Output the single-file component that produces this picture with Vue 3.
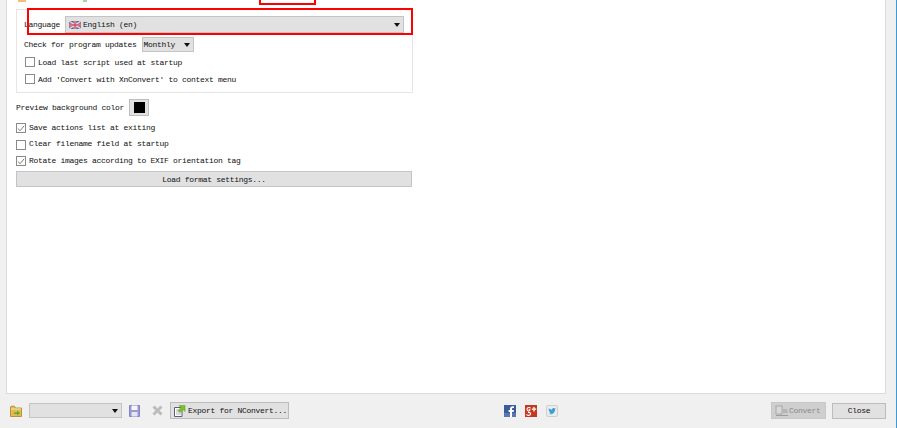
<script setup>
const boxRows = [
  { label: 'Load last script used at startup', checked: false },
  { label: "Add 'Convert with XnConvert' to context menu", checked: false },
]
const rows = [
  { label: 'Save actions list at exiting', checked: true },
  { label: 'Clear filename field at startup', checked: false },
  { label: 'Rotate images according to EXIF orientation tag', checked: true },
]
</script>

<template>
  <div class="window">
    <main class="panel">
      <div class="strip">
        <i class="mark orange"></i>
        <i class="mark green"></i>
      </div>
      <section class="group">
        <div class="lang-row">
          <span>Language</span>
          <div class="select lang">
            <svg class="flag" width="12" height="8" viewBox="0 0 12 8">
              <rect width="12" height="8" fill="#5a5a9c" />
              <path d="M0 0L12 8M12 0L0 8" stroke="#e0c8d4" stroke-width="1.6" />
              <path d="M6 0V8M0 4H12" stroke="#ecdce4" stroke-width="2.6" />
              <path d="M6 0V8M0 4H12" stroke="#cf4a60" stroke-width="1.4" />
            </svg>
            <span class="value">English (en)</span>
            <i class="arrow"></i>
          </div>
        </div>
        <div class="update-row">
          <span>Check for program updates</span>
          <div class="select monthly">
            <span class="value">Monthly</span>
            <i class="arrow"></i>
          </div>
        </div>
        <label v-for="r in boxRows" :key="r.label" class="check inner">
          <span class="box"></span>
          <span>{{ r.label }}</span>
        </label>
      </section>

      <div class="preview-row">
        <span>Preview background color</span>
        <button class="swatch-btn"><i class="swatch"></i></button>
      </div>
      <label v-for="r in rows" :key="r.label" class="check outer">
        <span class="box">
          <svg v-if="r.checked" width="9" height="9" viewBox="0 0 9 9">
            <path d="M1 4.5L3.5 7L8 1.5" fill="none" stroke="#777" stroke-width="1.1" />
          </svg>
        </span>
        <span class="outer-text">{{ r.label }}</span>
      </label>
      <button class="wide-btn">Load format settings...</button>

      <div class="annot annot-top"></div>
      <div class="annot annot-lang"></div>
    </main>

    <footer class="footer">
      <svg class="i-folder" width="12" height="12" viewBox="0 0 12 12">
        <path d="M0.5 2V11.5H11.5V3H5.5L4.5 1.2H1.2Z" fill="#e5b94a" stroke="#a8802c" stroke-width="0.8" />
        <path d="M1 4H11" stroke="#f6e6a6" />
        <path d="M4 7.5H7V5.5L10 8L7 10.5V9H4Z" fill="#4fae3a" />
      </svg>
      <div class="select script"><i class="arrow"></i></div>
      <svg class="i-save" width="11" height="12" viewBox="0 0 11 12">
        <path d="M0.5 0.5H10.5V11.5H0.5Z" fill="#9a9ad6" stroke="#8585c4" />
        <rect x="2.5" y="0.5" width="6" height="4.5" fill="#f6f6fc" />
        <rect x="2.5" y="7" width="6" height="4.5" fill="#e4e4f4" />
      </svg>
      <svg class="i-del" width="11" height="11" viewBox="0 0 11 11">
        <path d="M1.5 1.5L9.5 9.5M9.5 1.5L1.5 9.5" stroke="#bcbcbc" stroke-width="3" />
      </svg>
      <button class="btn export">
        <svg width="12" height="13" viewBox="0 0 12 13">
          <path d="M0.5 3.5H8V12.5H0.5Z" fill="#fff" stroke="#59617a" />
          <path d="M2 6H7M2 8H7M2 10H7" stroke="#9aa2b8" stroke-width="0.8" />
          <path d="M4 6.5L7 3.5L5 1.5H11V7.5L9 5.5L6 8.5Z" fill="#7fbf2a" stroke="#5c9a18" stroke-width="0.5" />
        </svg>
        <span>Export for NConvert...</span>
      </button>
      <div class="social">
        <svg width="12" height="12" viewBox="0 0 12 12">
          <rect width="12" height="12" fill="#3b5b9e" />
          <rect y="8" width="12" height="4" fill="#5a76b0" />
          <path d="M8 12V7H9.6L9.9 5H8V4C8 3.4 8.3 3 9 3H10V1.2H8.6C7 1.2 6 2.2 6 3.7V5H4.6V7H6V12Z" fill="#fff" />
        </svg>
        <svg width="12" height="12" viewBox="0 0 12 12">
          <rect width="12" height="12" fill="#c6381f" />
          <path d="M5.5 3.2C5 2.4 3 2 2.2 3.4C1.5 4.8 2.6 6 3.6 6C4.6 6 5 5.4 5 4.8H3.6M3 7.5C4.8 7 5.6 8 5.6 9C5.6 10.5 2 11 1.5 9.4" fill="none" stroke="#fff" stroke-width="1.1" />
          <path d="M9 2V6.5M6.8 4.2H11.2" stroke="#fff" stroke-width="1.3" />
        </svg>
        <svg width="12" height="12" viewBox="0 0 12 12">
          <rect x="0.5" y="0.5" width="11" height="11" rx="1.5" fill="#ececec" stroke="#cfcfcf" />
          <path d="M2.2 8.8C5.6 10 9.2 8 9 4.4L10 3.4L8.8 3.6C8 2.6 6 3 6 4.6C4.6 4.6 3.6 4 2.8 3.2C2.4 4.2 2.8 5.2 3.4 5.6L2.8 5.6C3 6.6 3.6 7 4.2 7.2L3.6 7.3C3.9 7.9 4.4 8.1 4.9 8.2C4.2 8.7 3.2 8.9 2.2 8.8Z" fill="#3d9fd8" />
        </svg>
      </div>
      <button class="btn convert">
        <svg width="14" height="12" viewBox="0 0 14 12">
          <rect x="1" y="1" width="6" height="8" fill="#d8d8d8" stroke="#a8a8a8" />
          <path d="M8 5H12M8 7H13M1 10.5H13" stroke="#9c9c9c" />
        </svg>
        <span>Convert</span>
      </button>
      <button class="btn close">Close</button>
    </footer>
  </div>
</template>

<style scoped>
.window {
  width: 897px;
  height: 428px;
  box-sizing: border-box;
  background: #f0f0f0;
  border-right: 1px solid #3c9ad6;
  display: flex;
  flex-direction: column;
  overflow: hidden;
  font-family: "Liberation Mono", monospace;
  font-size: 8px;
  letter-spacing: -0.3px;
  color: #111;
}
.panel {
  position: relative;
  height: 394px;
  box-sizing: border-box;
  margin: 0 10px 0 6px;
  padding: 0 9px;
  background: #fff;
  border: 1px solid #dcdcdc;
  border-top: 0;
  flex: none;
}
.strip {
  height: 9px;
  display: flex;
  align-items: flex-start;
  padding-left: 2px;
}
.mark {
  width: 8px;
  height: 2px;
  background: #f3bd7c;
}
.mark.green {
  width: 4px;
  margin-left: 57px;
  background: #a5d89a;
}
.group {
  width: 397px;
  height: 84px;
  box-sizing: border-box;
  border: 1px solid #e6e6e6;
  padding: 6px 7px 0;
}
.lang-row,
.update-row,
.preview-row {
  display: flex;
  align-items: center;
}
.lang-row {
  height: 17px;
  gap: 5px;
}
.update-row {
  height: 15px;
  margin-top: 4px;
  gap: 5px;
}
.select {
  position: relative;
  box-sizing: border-box;
  display: flex;
  align-items: center;
  background: #e1e1e1;
  border: 1px solid #c4c4c4;
}
.lang {
  width: 339px;
  height: 17px;
  padding-left: 3px;
  gap: 2px;
}
.monthly {
  width: 52px;
  height: 15px;
  padding-left: 1px;
}
.script {
  width: 93px;
  height: 15px;
  margin-left: 7px;
}
.arrow {
  position: absolute;
  right: 3px;
  top: 50%;
  margin-top: -2px;
  width: 0;
  height: 0;
  border: 3px solid transparent;
  border-top: 4px solid #111;
  border-bottom: 0;
}
.check {
  display: flex;
  align-items: center;
  gap: 3px;
  height: 10px;
}
.check.inner {
  margin-top: 5px;
  margin-left: 1px;
}
.check.inner + .check.inner {
  margin-top: 7px;
}
.check.outer {
  margin-top: 6.5px;
}
.preview-row + .check.outer {
  margin-top: 7px;
}
.outer-text {
  padding-bottom: 2px;
}
.box {
  box-sizing: border-box;
  width: 10px;
  height: 10px;
  background: #fff;
  border: 1px solid #8a8a8a;
  display: flex;
  align-items: center;
  justify-content: center;
  flex: none;
}
.preview-row {
  height: 17px;
  margin-top: 6px;
  gap: 5px;
}
.swatch-btn {
  width: 20px;
  height: 17px;
  padding: 0;
  box-sizing: border-box;
  background: #e1e1e1;
  border: 1px solid #bdbdbd;
  display: flex;
  align-items: center;
  justify-content: center;
}
.swatch {
  display: block;
  width: 11px;
  height: 11px;
  background: #000;
}
button {
  font: inherit;
  letter-spacing: inherit;
  color: inherit;
}
.wide-btn {
  display: block;
  width: 396px;
  height: 16px;
  margin-top: 5px;
  padding: 0;
  box-sizing: border-box;
  background: #e1e1e1;
  border: 1px solid #c4c4c4;
}
.annot {
  position: absolute;
  box-sizing: border-box;
  border: 2px solid #f00;
  pointer-events: none;
}
.annot-top {
  left: 252px;
  top: -4px;
  width: 57px;
  height: 9px;
}
.annot-lang {
  left: 20px;
  top: 8px;
  width: 386px;
  height: 27px;
}
.footer {
  flex: 1;
  display: flex;
  align-items: center;
  padding: 0 10px 1px 10px;
}
.i-save {
  margin-left: 7px;
}
.i-del {
  margin-left: 12px;
}
.btn {
  box-sizing: border-box;
  height: 17px;
  padding: 0 0 0 3px;
  display: flex;
  align-items: center;
  background: #e1e1e1;
  border: 1px solid #bcbcbc;
}
.export {
  width: 119px;
  margin-left: 7px;
  gap: 2px;
}
.social {
  display: flex;
  gap: 9px;
  margin-left: 215px;
}
.convert {
  width: 55px;
  margin-left: 213px;
  background: #cfcfcf;
  border-color: #c8c8c8;
  color: #8a8a8a;
}
.close {
  width: 54px;
  height: 16px;
  margin-left: 6px;
  padding: 0;
  justify-content: center;
}
</style>
